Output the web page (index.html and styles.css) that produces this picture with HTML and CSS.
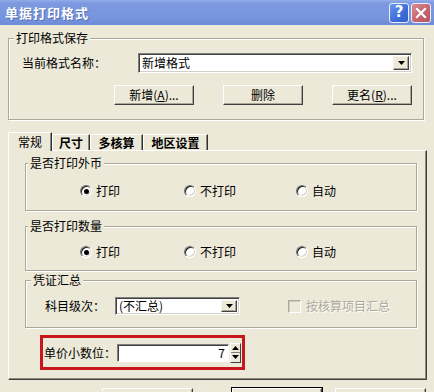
FILE: index.html
```html
<!DOCTYPE html>
<html>
<head>
<meta charset="utf-8">
<link rel="stylesheet" href="styles.css">
</head>
<body>
<div class="titlebar">
  <span class="title">单据打印格式</span>
  <div class="tb-buttons">
    <span class="tb-btn help">?</span>
    <span class="tb-btn close"><svg width="12" height="12" viewBox="0 0 12 12"><path d="M2 2L10 10M10 2L2 10" stroke="#fff" stroke-width="2.2" stroke-linecap="square"/></svg></span>
  </div>
</div>
<div class="main">
  <fieldset class="group g-save">
    <legend class="lg-save">打印格式保存</legend>
    <div class="gbody save-body">
      <div class="name-row">
        <span class="name-label">当前格式名称：</span>
        <div class="combo combo-wide"><span class="combo-text">新增格式</span><span class="drop"><svg width="7" height="4" viewBox="0 0 7 4"><path d="M0 0H7L3.5 4Z"/></svg></span></div>
      </div>
      <div class="btn-row">
        <span class="btn">新增(<u>A</u>)...</span>
        <span class="btn">删除</span>
        <span class="btn">更名(<u>R</u>)...</span>
      </div>
    </div>
  </fieldset>

  <div class="tabs">
    <span class="tab active t1">常规</span>
    <span class="tab t2">尺寸</span>
    <span class="tab t3">多核算</span>
    <span class="tab t4">地区设置</span>
  </div>
  <div class="panel">
    <fieldset class="group g-fx">
      <legend class="lg-inner">是否打印外币</legend>
      <div class="gbody radio-body fx-body">
        <div class="radios">
          <span class="ritem"><span class="radio on"></span>打印</span>
          <span class="ritem"><span class="radio"></span>不打印</span>
          <span class="ritem"><span class="radio"></span>自动</span>
        </div>
      </div>
    </fieldset>
    <fieldset class="group g-qty">
      <legend class="lg-inner">是否打印数量</legend>
      <div class="gbody radio-body qty-body">
        <div class="radios">
          <span class="ritem"><span class="radio on"></span>打印</span>
          <span class="ritem"><span class="radio"></span>不打印</span>
          <span class="ritem"><span class="radio"></span>自动</span>
        </div>
      </div>
    </fieldset>
    <fieldset class="group g-sum">
      <legend class="lg-sum">凭证汇总</legend>
      <div class="gbody sum-body">
        <span class="lvl-label">科目级次：</span>
        <div class="combo combo-small"><span class="combo-text">(不汇总)</span><span class="drop"><svg width="7" height="4" viewBox="0 0 7 4"><path d="M0 0H7L3.5 4Z"/></svg></span></div>
        <span class="check"></span>
        <span class="check-label">按核算项目汇总</span>
      </div>
    </fieldset>
    <div class="highlight">
      <span class="dec-label">单价小数位：</span>
      <div class="num-input">7</div>
      <div class="spin">
        <span class="spin-half"><svg width="7" height="4" viewBox="0 0 7 4"><path d="M0 4H7L3.5 0Z"/></svg></span>
        <span class="spin-half"><svg width="7" height="4" viewBox="0 0 7 4"><path d="M0 0H7L3.5 4Z"/></svg></span>
      </div>
    </div>
  </div>
  <div class="footer">
    <span class="btn fbtn f1">预览</span>
    <span class="btn fbtn f2 default">确定</span>
    <span class="btn fbtn f3">取消</span>
  </div>
</div>
</body>
</html>
```
FILE: styles.css
```css
* { box-sizing: border-box; }
html, body { margin: 0; padding: 0; }
body {
  width: 434px;
  height: 392px;
  overflow: hidden;
  background: #ece9d8;
  font-family: "Noto Sans CJK SC", "Noto Sans", sans-serif;
  font-size: 12px;
  line-height: 14px;
  color: #000;
}

/* title bar */
.titlebar {
  height: 25px;
  display: flex;
  align-items: center;
  justify-content: space-between;
  padding: 0 3px 0 5px;
  background: linear-gradient(#92ade9 0, #7d9ae0 3px, #7795dd 18px, #6d8bd6 25px);
}
.title {
  color: #fff;
  font-weight: bold;
  font-size: 13px;
  letter-spacing: 1px;
  text-shadow: 1px 1px 0 #5670b8;
}
.tb-buttons { display: flex; gap: 2px; }
.tb-btn {
  width: 20px;
  height: 20px;
  border: 1px solid #e8eefc;
  border-radius: 3px;
  display: flex;
  align-items: center;
  justify-content: center;
  color: #fff;
  font-family: "DejaVu Sans", sans-serif;
  font-weight: bold;
  font-size: 15px;
  line-height: 15px;
}
.help { background: linear-gradient(135deg, #6d95ee, #3d6cd9 60%, #3562cf); }
.close { background: linear-gradient(135deg, #d88a90, #c5636c 60%, #b7555e); }

/* main */
.main { padding: 6px 0 0 8px; }

.group {
  margin: 0;
  padding: 0;
  min-width: 0;
  border: 1px solid #aca899;
  box-shadow: inset 1px 1px 0 #fff, 1px 1px 0 #fff;
}
.group legend {
  padding: 0 2px;
  line-height: 14px;
  background: #ece9d8;
}
.lg-save { margin-left: 5px; }
.lg-inner { margin-left: 2px; }
.lg-sum { margin-left: 5px; }

.g-save { margin-right: 10px; }
.save-body { padding: 8px 11px 14px 13px; }
.name-row { display: flex; align-items: center; height: 20px; }
.name-label { width: 116px; }

.combo {
  display: flex;
  align-items: stretch;
  background: #fff;
  border: 1px solid;
  border-color: #808080 #fff #fff #808080;
  box-shadow: inset 1px 1px 0 #404040, inset -1px -1px 0 #d4d0c8;
  padding: 2px;
}
.combo-wide { width: 274px; height: 20px; }
.combo-small { width: 125px; height: 18px; }
.combo-text { flex: 1; padding-left: 1px; display: flex; align-items: center; }
.drop {
  width: 16px;
  display: flex;
  align-items: center;
  justify-content: center;
  background: #ece9d8;
  border: 1px solid;
  border-color: #f4f3ee #404040 #404040 #f4f3ee;
  box-shadow: inset -1px -1px 0 #aca899;
}

.btn-row {
  margin-top: 12px;
  display: flex;
  justify-content: flex-end;
  gap: 29px;
}
.btn {
  width: 80px;
  height: 20px;
  display: flex;
  align-items: center;
  justify-content: center;
  background: #ece9d8;
  border: 1px solid;
  border-color: #fff #404040 #404040 #fff;
  box-shadow: inset -1px -1px 0 #aca899;
}
.btn u { text-decoration: underline; }

/* tabs */
.tabs {
  margin-top: 12px;
  height: 18px;
  display: flex;
  align-items: flex-end;
}
.tab {
  height: 16px;
  display: flex;
  align-items: center;
  justify-content: center;
  font-weight: bold;
  border-top: 1px solid #fff;
  border-left: 1px solid #fff;
  border-right: 1px solid #303030;
  box-shadow: inset -1px 0 0 #8c8a7e;
}
.tab.active {
  height: 19px;
  margin-bottom: -1px;
  font-weight: normal;
  background: #ece9d8;
  position: relative;
  z-index: 1;
}
.t1 { width: 44px; }
.t2 { width: 38px; }
.t3 { width: 53px; }
.t4 { width: 65px; }

.panel {
  margin-right: 7px;
  border: 1px solid;
  border-color: #fff #404040 #404040 #fff;
  box-shadow: inset -1px -1px 0 #8c8a7e;
  padding: 5px 9px 9px 16px;
}

.fx-body { padding: 14px 0 12px 54px; }
.qty-body { padding: 12px 0 11px 54px; }
.g-qty { margin-top: 8px; }
.g-sum { margin-top: 2px; }

.radios {
  display: grid;
  grid-template-columns: 104px 112px auto;
  height: 14px;
}
.ritem { display: flex; align-items: center; gap: 4px; }
.radio {
  width: 12px;
  height: 12px;
  border-radius: 50%;
  background: #fff;
  border: 1px solid;
  border-color: #6f6f6f #fff #fff #6f6f6f;
  box-shadow: inset 1px 1px 0 #202020, inset -1px -1px 0 #d4d0c8;
  display: inline-flex;
  align-items: center;
  justify-content: center;
}
.radio.on::after {
  content: "";
  width: 5px;
  height: 5px;
  border-radius: 50%;
  background: #000;
}

.sum-body {
  padding: 10px 0 12px 19px;
  display: flex;
  align-items: center;
}
.lvl-label { width: 70px; }
.check {
  margin-left: 48px;
  width: 13px;
  height: 13px;
  border: 1px solid;
  border-color: #aca899 #fff #fff #aca899;
  box-shadow: inset 1px 1px 0 #cfcdc1;
  background: #ece9d8;
}
.check-label {
  margin-left: 5px;
  color: #aca899;
  text-shadow: 1px 1px 0 #fff;
}

.highlight {
  margin-top: 7px;
  margin-left: 15px;
  width: 205px;
  height: 35px;
  border: 3px solid #c8161d;
  padding-left: 1px;
  display: flex;
  align-items: center;
}
.dec-label { width: 73px; }
.num-input {
  width: 112px;
  height: 18px;
  background: #fff;
  border: 1px solid;
  border-color: #808080 #fff #fff #808080;
  box-shadow: inset 1px 1px 0 #404040;
  text-align: right;
  padding-right: 3px;
  line-height: 16px;
}
.spin {
  margin-left: 1px;
  width: 11px;
  height: 20px;
  display: flex;
  flex-direction: column;
  background: #ece9d8;
  border: 1px solid;
  border-color: #fff #404040 #404040 #fff;
}
.spin-half {
  flex: 1;
  display: flex;
  align-items: center;
  justify-content: center;
}
.spin-half:first-child { border-bottom: 1px solid #808080; }

.footer {
  margin-top: 8px;
  padding-left: 94px;
  display: flex;
}
.fbtn { height: 23px; width: 91px; align-items: flex-end; padding-bottom: 2px; }
.f2 { margin-left: 39px; width: 90px; }
.f3 { margin-left: 13px; }
.default { outline: 1px solid #000; outline-offset: 0; }
```
